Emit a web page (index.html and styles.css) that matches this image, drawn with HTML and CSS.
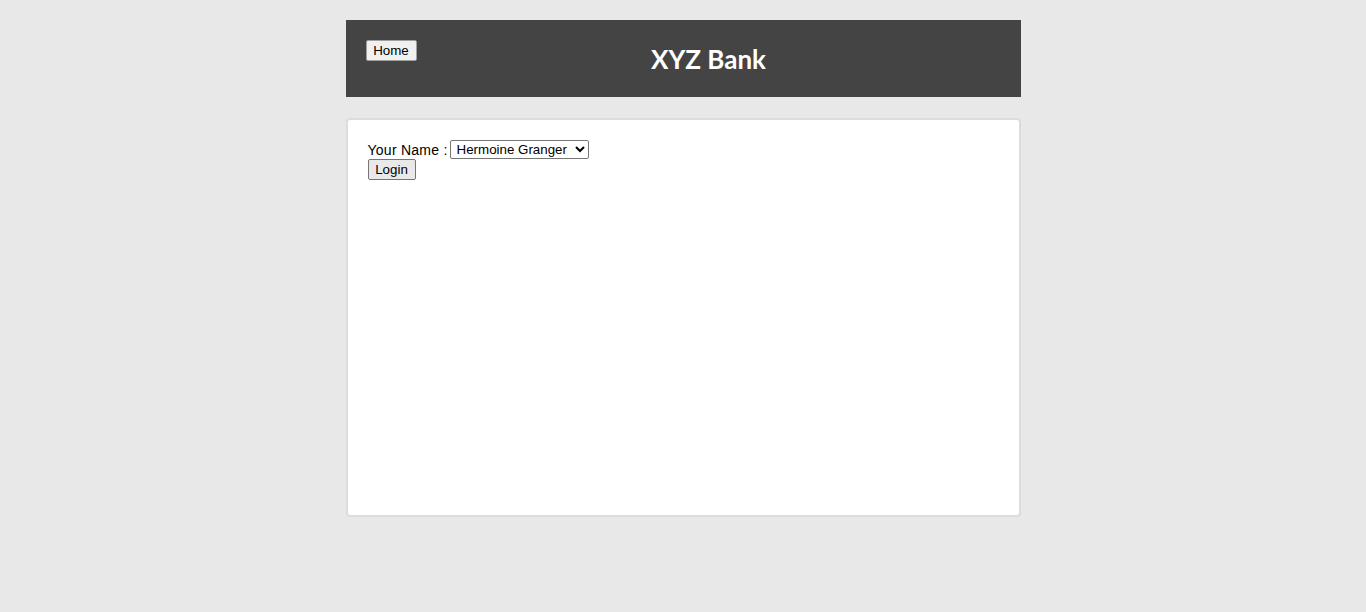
FILE: index.html
```html
<!DOCTYPE html>
<html>
<head>
<meta charset="utf-8">
<title>XYZ Bank</title>
<link rel="stylesheet" href="styles.css">
</head>
<body>
<div class="page">
  <header class="mainhead">
    <button class="btn home">Home</button>
    <strong class="title">XYZ Bank</strong>
  </header>
  <main class="box">
    <form class="form">
      <div class="row">
        <label class="label" for="userSelect">Your Name :</label>
        <select id="userSelect" class="select">
          <option>Hermoine Granger</option>
          <option>Harry Potter</option>
          <option>Ron Weasly</option>
          <option>Albus Dumbledore</option>
          <option>Neville Longbottom</option>
        </select>
      </div>
      <button type="button" class="btn login">Login</button>
    </form>
  </main>
</div>
</body>
</html>
```

FILE: styles.css
```css
html, body {
  margin: 0;
  padding: 0;
}
body {
  background: #e8e8e8;
  font-family: "Liberation Sans", Arial, sans-serif;
  font-size: 14px;
  color: #000;
}
.page {
  width: 675px;
  margin: 20px auto 0;
}
.mainhead {
  background: #444444;
  height: 77px;
  box-sizing: border-box;
  padding: 20px 20px 0;
  display: flex;
  align-items: flex-start;
}
.title {
  flex: 1;
  text-align: center;
  color: #fff;
  font-family: Lato, "Open Sans", sans-serif;
  font-weight: 700;
  font-size: 26px;
  line-height: 30px;
  margin-top: 4px;
}
.btn {
  font-family: "Liberation Sans", Arial, sans-serif;
  font-size: 13.33px;
  line-height: 15px;
  padding: 1px 6px;
  margin: 0;
  border-radius: 2px;
  color: #000;
}
.home {
  width: 51px;
  height: 21px;
  background: #f0f0f0;
  border: 1px solid #a0a0a0;
}
.login {
  width: 48px;
  height: 21px;
  background: #e9e9e9;
  border: 1px solid #767676;
  display: block;
}
.box {
  margin-top: 21px;
  height: 399px;
  box-sizing: border-box;
  background: #fff;
  border: 2px solid #dcdcdc;
  border-radius: 4px;
  padding: 20px 20px 0 20px;
}
.form {
  margin: 0;
}
.row {
  display: flex;
  align-items: center;
  height: 19px;
}
.label {
  letter-spacing: 0.25px;
  margin-right: 2px;
}
.select {
  font-family: "Liberation Sans", Arial, sans-serif;
  font-size: 13.33px;
  height: 19px;
  width: 139px;
  padding: 0 2px;
  border: 1px solid #767676;
  border-radius: 2px;
  background: #fff;
  color: #000;
}
```
